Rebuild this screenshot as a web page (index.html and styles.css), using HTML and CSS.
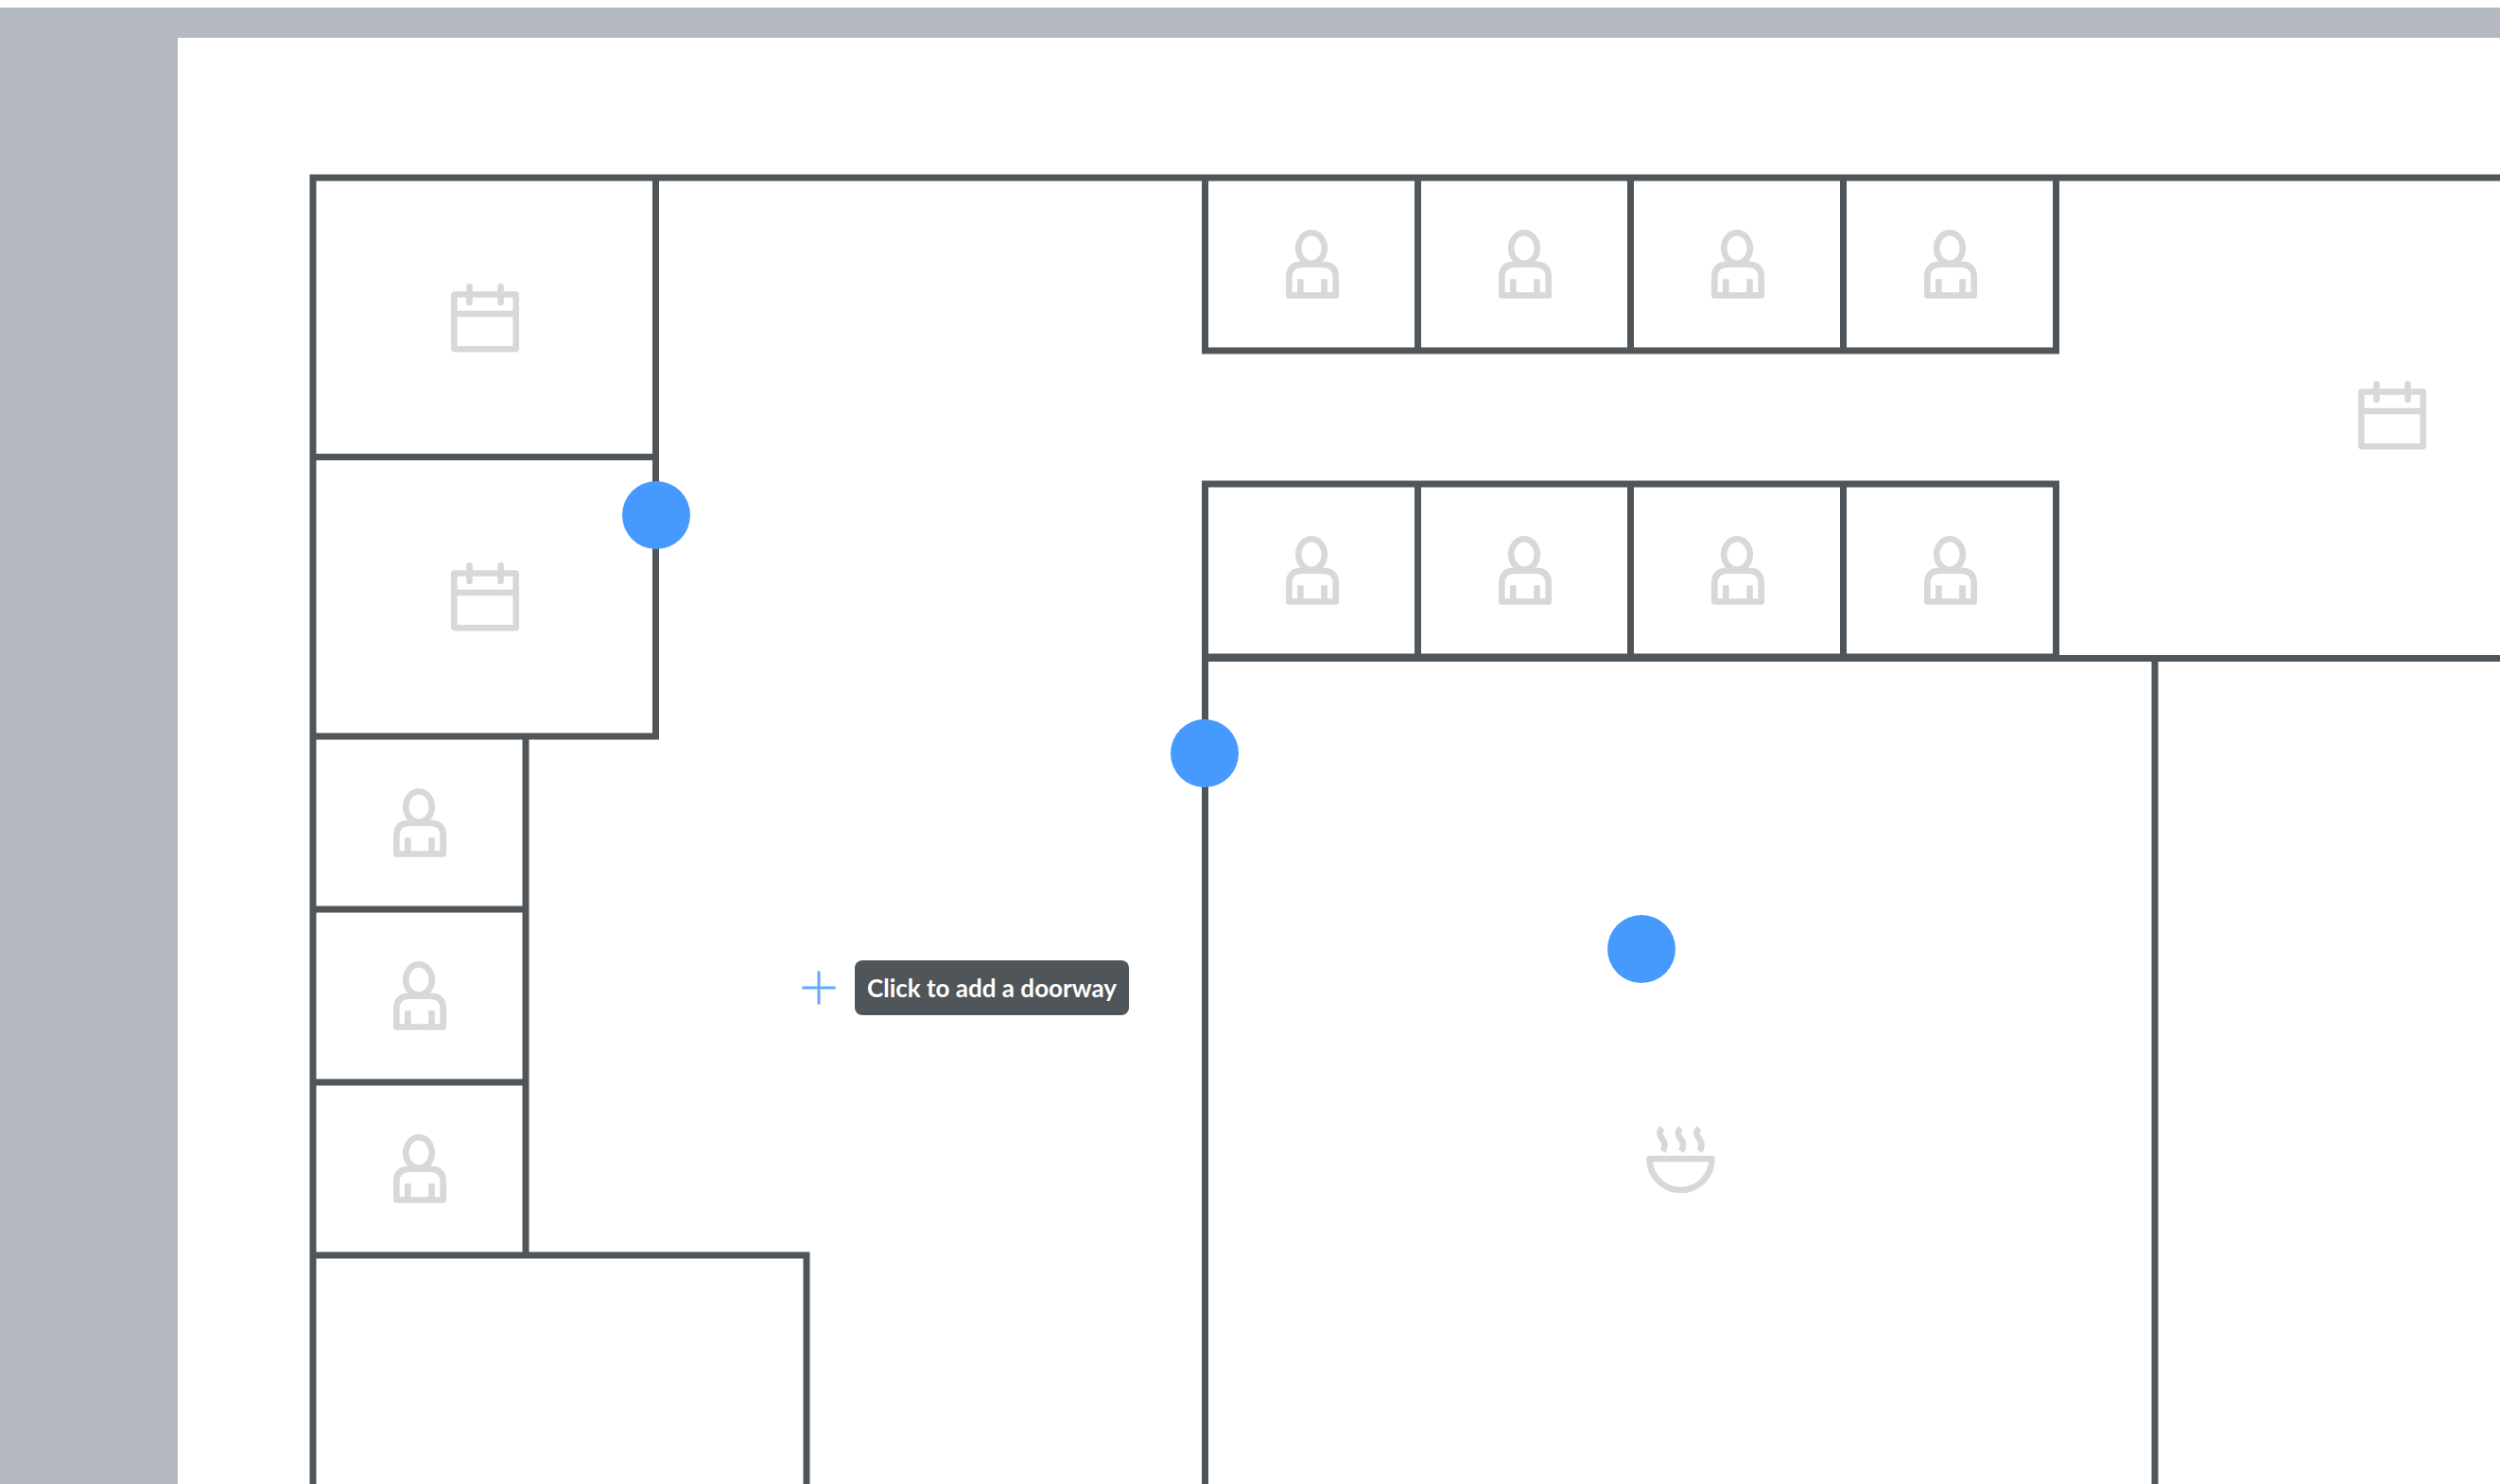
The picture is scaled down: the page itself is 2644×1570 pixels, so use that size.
FILE: index.html
```html
<!DOCTYPE html>
<html lang="en">
<head>
  <meta charset="utf-8">
  <meta name="viewport" content="width=device-width, initial-scale=1">
  <title>Floor plan editor</title>
  <link rel="stylesheet" href="styles.css">
</head>
<body>
  <main class="workspace">
    <section class="sheet" aria-label="Floor plan">
      <svg class="plan" aria-hidden="true">
        <defs>
          <symbol id="meeting" viewBox="0 0 72 73">
            <rect x="3.3" y="11.5" width="65.4" height="57.7" rx="0.5"/>
            <path d="M3 32H69M19.500 3.300V20M52.500 3.300V20"/>
          </symbol>
          <symbol id="person" viewBox="0 0 72 73">
            <ellipse cx="36" cy="19.5" rx="13.8" ry="16.2"/>
            <path d="M12.300 69.500V50Q12.300 36.700 26 36.700H48Q61.700 36.700 61.700 50V69.500Z"/>
            <path class="leg" d="M24.300 70V52.300M49.500 70V52.300"/>
          </symbol>
          <symbol id="kitchen" viewBox="0 0 73 72">
            <path d="M3.500 35H69.500A33 33 0 0 1 3.500 35Z"/>
            <path class="leg" d="M17 2.500C13.500 6 13.500 9 16.500 13C20.500 18 20.500 22 17.500 27M36.500 2.500C33 6 33 9 36 13C40 18 40 22 37 27M56 2.500C52.500 6 52.500 9 55.500 13C59.500 18 59.500 22 56.500 27"/>
          </symbol>
        </defs>

        <g class="walls">
          <path d="M143 3000V148H4000"/>
          <path d="M143 443.500H505.500M505.500 148V739H143"/>
          <path d="M368 739V1288M143 922H368M143 1105H368"/>
          <path d="M143 1288H665V3000"/>
          <path d="M1086.500 148V331H1986.500V148M1311.500 148V331M1536.500 148V331M1761.500 148V331"/>
          <path d="M1086.500 3000V472H1986.500V655H1086.500M1311.500 472V655M1536.500 472V655M1761.500 472V655"/>
          <path d="M1086.500 656.500H4000M2091 656.500V3000"/>
        </g>

        <g class="icons" stroke-width="6.6">
          <use href="#meeting" x="289" y="260" width="72" height="73"/>
          <use href="#meeting" x="289" y="555" width="72" height="73"/>
          <use href="#meeting" x="2306" y="363" width="72" height="73"/>
          <use href="#person" x="219" y="794" width="72" height="73"/>
          <use href="#person" x="219" y="977" width="72" height="73"/>
          <use href="#person" x="219" y="1160" width="72" height="73"/>
          <use href="#person" x="1163" y="203" width="72" height="73"/>
          <use href="#person" x="1388" y="203" width="72" height="73"/>
          <use href="#person" x="1613" y="203" width="72" height="73"/>
          <use href="#person" x="1838" y="203" width="72" height="73"/>
          <use href="#person" x="1163" y="527" width="72" height="73"/>
          <use href="#person" x="1388" y="527" width="72" height="73"/>
          <use href="#person" x="1613" y="527" width="72" height="73"/>
          <use href="#person" x="1838" y="527" width="72" height="73"/>
          <use href="#kitchen" x="1553" y="1151" width="73" height="72"/>
        </g>
      </svg>

      <button class="doorway doorway-meeting" type="button" aria-label="Meeting room doorway"></button>
      <button class="doorway doorway-kitchen" type="button" aria-label="Kitchen doorway"></button>
      <button class="doorway doorway-new" type="button" aria-label="Unplaced doorway"></button>

      <div class="cursor">
        <svg class="cross" viewBox="0 0 36 36" aria-hidden="true">
          <path class="cross-halo" d="M18 0V36M0 18H36"/>
          <path class="cross-line" d="M18 1V35M1 18H35"/>
        </svg>
        <span class="tooltip" role="tooltip">Click to add a doorway</span>
      </div>
    </section>
  </main>
</body>
</html>
```

FILE: styles.css
```css
* {
  box-sizing: border-box;
}

body {
  margin: 0;
  padding-top: 8px;
  min-height: 100vh;
  display: flex;
  background: #fff;
  font-family: Lato, "Liberation Sans", sans-serif;
}

.workspace {
  flex: 1;
  display: flex;
  padding: 32px 0 0 188px;
  background: #b4b8c1;
  overflow: hidden;
}

.sheet {
  position: relative;
  flex: 1;
  background: #fff;
  overflow: hidden;
}

/* The plan is a free canvas, drawn in sheet coordinates. */
.plan {
  position: absolute;
  inset: 0;
  width: 100%;
  height: 100%;
}

.walls {
  fill: none;
  stroke: #4f5559;
  stroke-width: 7px;
}

.icons {
  fill: none;
  stroke: #d8d8d8;
  stroke-linecap: round;
  stroke-linejoin: round;
}

.leg {
  stroke-linecap: butt;
}

.doorway {
  position: absolute;
  width: 72px;
  height: 72px;
  padding: 0;
  border: 0;
  border-radius: 50%;
  background: #4699fd;
  transform: translate(-50%, -50%);
  cursor: pointer;
}

.doorway-meeting {
  left: 506px;
  top: 505px;
}

.doorway-kitchen {
  left: 1086px;
  top: 757px;
}

.doorway-new {
  left: 1548px;
  top: 964px;
}

.cursor {
  position: absolute;
  left: 660px;
  top: 976px;
  display: flex;
  align-items: center;
  gap: 20px;
}

.cross {
  width: 36px;
  height: 36px;
  fill: none;
}

.cross-halo {
  stroke: #b0d3ff;
  stroke-width: 4px;
}

.cross-line {
  stroke: #64a9ff;
  stroke-width: 2px;
}

.tooltip {
  padding: 12px 13px;
  border-radius: 8px;
  background: #4f5559;
  color: #fff;
  font-size: 26px;
  font-weight: 700;
  line-height: 34px;
  white-space: nowrap;
}
```
